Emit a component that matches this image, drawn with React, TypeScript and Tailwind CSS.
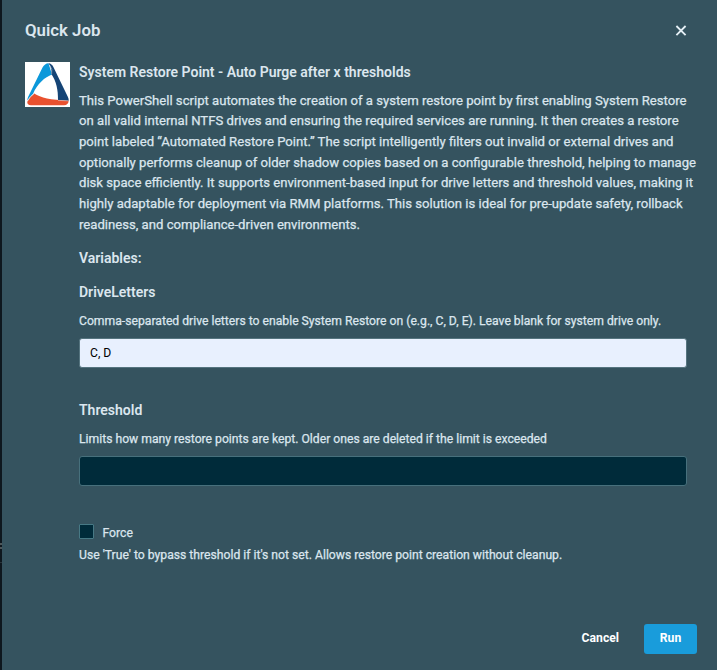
import React from "react";

const lines = [
  "This PowerShell script automates the creation of a system restore point by first enabling System Restore",
  "on all valid internal NTFS drives and ensuring the required services are running. It then creates a restore",
  "point labeled “Automated Restore Point.” The script intelligently filters out invalid or external drives and",
  "optionally performs cleanup of older shadow copies based on a configurable threshold, helping to manage",
  "disk space efficiently. It supports environment-based input for drive letters and threshold values, making it",
  "highly adaptable for deployment via RMM platforms. This solution is ideal for pre-update safety, rollback",
  "readiness, and compliance-driven environments.",
];

function Logo() {
  return (
    <svg className="shrink-0" width="45" height="45" viewBox="0 0 45 45">
      <rect width="45" height="45" fill="#fff" />
      <path d="M2.3 38.5Q2.4 36.5 3.2 34.8L17.5 5.5Q19.8 1.4 23.5 1.2L27 12.5C20 15 12 22 8.2 31.5Q5 34.5 2.3 38.5Z" fill="#0b98da" />
      <path d="M23.5 1.2Q26.8 1.5 28.5 5.2L42.8 34.8Q44 37 43.6 39L33 38.2C33.2 28 31.5 19.5 26 11.5Q27 6 23.5 1.2Z" fill="#154475" />
      <path d="M2.3 39.8Q4.8 34.5 9.2 31.6C16 36 25 38 43.7 38.8Q43.3 43.2 39 43.3H6Q2 43.2 2.3 39.8Z" fill="#e9512f" />
      <path d="M24.5 3Q28 7 26.6 12.2M2.5 39Q5 34.5 9 32M33 38.4L43.5 38.8" stroke="#dfe9ee" strokeWidth=".5" fill="none" />
    </svg>
  );
}

export default function App() {
  return (
    <div className="flex h-[670px] w-[717px] overflow-hidden bg-[#35535f] font-['Roboto',sans-serif] text-[#dbe6ee]">
      <div className="flex w-[2px] shrink-0 flex-col bg-[#0e171e]">
        <div className="mt-[543px] h-[2px] bg-[#4e575a]" />
        <div className="mt-[2px] h-[2px] bg-[#4e575a]" />
        <div className="mt-[13px] h-px bg-[#29343a]" />
      </div>
      <main className="flex min-w-0 flex-1 flex-col pr-[20px] pl-[23px]">
        <header className="flex h-[62px] shrink-0 items-center justify-between pr-[10px]">
          <h1 className="text-[16.8px] font-semibold">Quick Job</h1>
          <svg width="12" height="12" viewBox="0 0 12 12" stroke="#e6f0f6" strokeWidth="1.8">
            <path d="M1.4 1 10.6 10.2M10.6 1 1.4 10.2" />
          </svg>
        </header>
        <div className="flex gap-[9px]">
          <Logo />
          <section className="flex w-[608px] shrink-0 flex-col">
            <h2 className="h-[28px] text-[14px] leading-[20px] font-semibold">System Restore Point - Auto Purge after x thresholds</h2>
            <div className="mt-[0.7px] h-[144.3px] [-webkit-text-stroke:0.25px]">
              {lines.map((t) => (
                <p key={t} className="h-[20.65px] text-[13.13px] leading-[20.65px] whitespace-nowrap">{t}</p>
              ))}
            </div>
            <h3 className="mt-[13px] text-[14px] leading-[20px] font-semibold">Variables:</h3>
            <h3 className="mt-[14px] text-[14px] leading-[20px] font-semibold">DriveLetters</h3>
            <p className="mt-[9px] text-[12.18px] leading-[20px] [-webkit-text-stroke:0.25px]">Comma-separated drive letters to enable System Restore on (e.g., C, D, E). Leave blank for system drive only.</p>
            <input readOnly value="C, D" className="mt-[7px] h-[30px] w-full rounded-[3px] border border-[#55747f] bg-[#e8f0fe] px-[10px] text-[12.16px] text-black" />
            <h3 className="mt-[32px] text-[14px] leading-[20px] font-semibold">Threshold</h3>
            <p className="mt-[9px] text-[12.18px] leading-[20px] [-webkit-text-stroke:0.25px]">Limits how many restore points are kept. Older ones are deleted if the limit is exceeded</p>
            <input readOnly className="mt-[7px] h-[30px] w-full rounded-[3px] border border-[#47707c] bg-[#002b3a] px-[10px] text-[12px]" />
            <label className="mt-[36px] flex h-[20px] items-center gap-[8.5px] text-[12.18px] [-webkit-text-stroke:0.25px]">
              <span className="mb-[1px] size-[15px] rounded-[1px] border border-[#477985] bg-[#002b3a]" />
              <span className="pt-[2px]">Force</span>
            </label>
            <p className="mt-[3px] text-[12.18px] leading-[20px] [-webkit-text-stroke:0.25px]">Use 'True' to bypass threshold if it's not set. Allows restore point creation without cleanup.</p>
          </section>
        </div>
        <footer className="mt-auto mb-[16px] flex items-center justify-end gap-[25px] text-[12.16px] font-bold text-white">
          <button className="pb-[2px]">Cancel</button>
          <button className="h-[30px] w-[53px] rounded-[3px] bg-[#199cdb] pb-[2px]">Run</button>
        </footer>
      </main>
    </div>
  );
}
